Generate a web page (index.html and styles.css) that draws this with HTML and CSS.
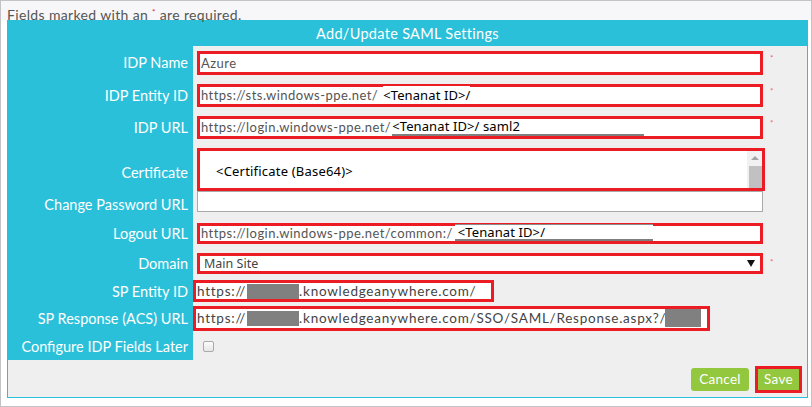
FILE: index.html
```html
<!DOCTYPE html>
<html>
<head>
<meta charset="utf-8">
<link rel="stylesheet" href="styles.css">
</head>
<body>
<div class="page">
  <div class="note">Fields marked with an <span class="req">*</span> are required.</div>
  <div class="panel">
    <div class="panel-head">Add/Update SAML Settings</div>
    <div class="form">
      <div class="label">IDP Name</div>
      <div class="cell">
        <div class="box h24">Azure</div><span class="star">*</span>
      </div>

      <div class="label">IDP Entity ID</div>
      <div class="cell">
        <div class="box h23">https://sts.windows-ppe.net/<span class="paste gap">&lt;Tenanat ID&gt;/</span></div><span class="star">*</span>
      </div>

      <div class="label">IDP URL</div>
      <div class="cell">
        <div class="box h23">https://login.windows-ppe.net/<span class="paste under w-idp">&lt;Tenanat ID&gt;/ saml2</span></div><span class="star">*</span>
      </div>

      <div class="label label-cert">Certificate</div>
      <div class="cell cell-end">
        <div class="box cert">
          <span class="paste cert-text">&lt;Certificate (Base64)&gt;</span>
          <div class="scroll"><span class="arrow-up"></span><span class="thumb"></span></div>
        </div>
      </div>

      <div class="label">Change Password URL</div>
      <div class="cell cell-start">
        <div class="plain"></div>
      </div>

      <div class="label">Logout URL</div>
      <div class="cell">
        <div class="box h21">https://login.windows-ppe.net/common:/<span class="paste gap under over w-logout">&lt;Tenanat ID&gt;/</span></div>
      </div>

      <div class="label">Domain</div>
      <div class="cell">
        <div class="box h21 select"><span class="sel-text">Main Site</span><span class="caret"></span></div><span class="star star-dom">*</span>
      </div>

      <div class="label">SP Entity ID</div>
      <div class="cell cell-sp">
        <div class="box sp sp1">https://<span class="redact r1"></span>.knowledgeanywhere.com/</div>
      </div>

      <div class="label">SP Response (ACS) URL</div>
      <div class="cell cell-sp">
        <div class="box sp sp2">https://<span class="redact r1"></span>.knowledgeanywhere.com/SSO/SAML/Response.aspx?/<span class="redact r2"></span></div>
      </div>

      <div class="label">Configure IDP Fields Later</div>
      <div class="cell">
        <span class="check"></span>
      </div>
    </div>
    <div class="footer">
      <button class="btn cancel">Cancel</button>
      <button class="btn save">Save</button>
    </div>
  </div>
</div>
</body>
</html>
```
FILE: styles.css
```css
* { box-sizing: border-box; }
html, body { margin: 0; padding: 0; background: #ffffff; }
body { width: 812px; height: 407px; overflow: hidden; font-family: "Lato", "Open Sans", sans-serif; }

.page {
  width: 812px;
  height: 407px;
  border: 1px solid #c3c3c5;
  background: #ffffff;
}

.note {
  height: 19px;
  background: #f7f7f9;
  color: #555555;
  font-size: 14px;
  letter-spacing: 0.35px;
  line-height: 22px;
  padding-left: 6px;
}
.req { color: #e02020; font-size: 8px; vertical-align: 5px; }

.panel {
  margin: 0 3px 0 6px;
  border: 1px solid #2bc0d9;
  background: #efefef;
}

.panel-head {
  height: 25px;
  background: #2bc0d9;
  color: #ffffff;
  font-size: 14.5px;
  letter-spacing: 0.3px;
  line-height: 26px;
  text-align: center;
}

.form {
  display: grid;
  grid-template-columns: 185px 1fr;
  grid-template-rows: 33px 32px 32px 48px 26px 32px 29px 26px 28px 28px;
}

.label {
  background: #2bc0d9;
  color: #ffffff;
  font-size: 14.5px;
  display: flex;
  align-items: center;
  justify-content: flex-end;
  padding-right: 5px;
  white-space: nowrap;
}
.label-cert { padding-top: 10px; }

.cell {
  display: flex;
  align-items: center;
  padding-left: 4px;
}
.cell-end { align-items: flex-end; }
.cell-start { align-items: flex-start; }
.cell-sp { padding-left: 0; }

.box {
  width: 566px;
  border: 3px solid #ec1c24;
  background: #ffffff;
  color: #555555;
  font-size: 13px;
  letter-spacing: 0.45px;
  display: flex;
  align-items: center;
  padding-left: 1px;
  white-space: nowrap;
  position: relative;
}
.h24 { height: 24px; }
.h23 { height: 23px; }
.h21 { height: 21px; }

.star {
  align-self: flex-start;
  margin-top: 8px;
  margin-left: 7px;
  color: #ef5a6a;
  font-size: 8px;
  line-height: 8px;
}
.star-dom { margin-top: 9px; }

.paste {
  font-family: "Noto Sans", "Open Sans", sans-serif;
  color: #000000;
  font-size: 13px;
  letter-spacing: 0.1px;
  background: #ffffff;
}
.gap { margin-left: 5px; }
.under {
  display: inline-block;
  height: 17px;
  line-height: 15px;
  border-bottom: 2px solid #7f7f7f;
  align-self: flex-end;
}
.w-idp { width: 252px; margin-left: 1px; }
.over { border-top: 1px solid #8a8a8a; }
.w-logout { width: 198px; margin-left: 2px; padding-left: 3px; }

.cert {
  height: 43px;
  width: 568px;
  align-items: center;
}
.cert-text { margin-left: 15px; margin-top: 2px; font-size: 13px; letter-spacing: 0.2px; }
.scroll {
  position: absolute;
  right: 0;
  top: 0;
  bottom: 0;
  width: 15px;
  background: #f1f1f1;
}
.arrow-up {
  position: absolute;
  left: 4px;
  top: 5px;
  width: 0;
  height: 0;
  border-left: 4px solid transparent;
  border-right: 4px solid transparent;
  border-bottom: 4px solid #a3a3a3;
}
.thumb {
  position: absolute;
  left: 2px;
  right: 0;
  top: 15px;
  bottom: 0;
  background: #c1c1c1;
}

.plain {
  width: 566px;
  height: 21px;
  background: #ffffff;
  border: 1px solid #a9a9a9;
}

.select { padding-left: 4px; justify-content: space-between; letter-spacing: 0; }
.sel-text { font-family: "Noto Sans", sans-serif; font-size: 12.5px; color: #444444; }
.caret {
  width: 0;
  height: 0;
  margin-right: 5px;
  border-left: 4px solid transparent;
  border-right: 4px solid transparent;
  border-top: 7px solid #111111;
}

.sp { color: #444444; padding-left: 1px; font-size: 13.5px; letter-spacing: 0.75px; }
.sp1 { width: 301px; height: 22px; }
.sp2 { width: 517px; height: 25px; }
.redact {
  display: inline-block;
  height: 15px;
  background: #808080;
}
.r1 { width: 52px; margin-left: 1px; }
.r2 { width: 36px; height: 18px; margin-left: -1px; }

.check {
  width: 11px;
  height: 11px;
  margin-left: 6px;
  border: 1px solid #aaaaaa;
  border-radius: 2px;
  background: linear-gradient(#fcfcfc, #e6e6e6);
}

.footer {
  height: 37px;
  display: flex;
  justify-content: flex-end;
  align-items: center;
  gap: 6px;
  padding-right: 5px;
  padding-top: 1px;
}
.btn {
  font-family: "Lato", "Open Sans", sans-serif;
  font-size: 13.5px;
  letter-spacing: 0.3px;
  color: #ffffff;
  background: #93c83e;
  border: none;
  border-radius: 3px;
  height: 23px;
  padding: 0 6px;
}
.cancel { width: 58px; }
.save {
  width: 47px;
  height: 27px;
  border: 3px solid #ec1c24;
  border-radius: 0;
  padding: 0;
}
```
